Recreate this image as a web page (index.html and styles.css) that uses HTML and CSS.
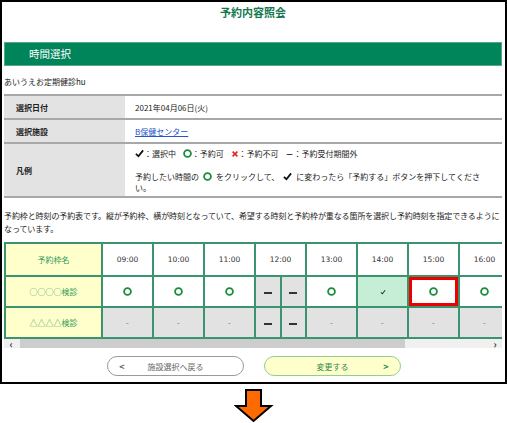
FILE: index.html
```html
<!DOCTYPE html>
<html>
<head>
    <meta charset="UTF-8">
    <title>予約内容照会</title>
    <link rel="stylesheet" href="styles.css">
</head>
<body>
    <div class="frame">
        <h1 class="page-title">予約内容照会</h1>
        <div class="section-bar">時間選択</div>
        <div class="menu-name">あいうえお定期健診hu</div>

        <table class="info-table">
            <tr>
                <th>選択日付</th>
                <td>2021年04月06日(火)</td>
            </tr>
            <tr>
                <th>選択施設</th>
                <td><a href="#">B保健センター</a></td>
            </tr>
            <tr class="legend-row">
                <th>凡例</th>
                <td>
                    <p class="legend">
                        <svg class="ic-check" viewBox="0 0 10 10"><path d="M1 5.5 L3.8 8 L9 1.5"/></svg>：選択中
                        <svg class="ic-ok" viewBox="0 0 10 10"><circle cx="5" cy="5" r="3.8"/></svg>：予約可
                        <svg class="ic-ng" viewBox="0 0 10 10"><path d="M2 2 L8 8 M8 2 L2 8"/></svg>：予約不可
                        <span class="dash">－</span>：予約受付期間外
                    </p>
                    <p class="howto">予約したい時間の<svg class="ic-ok" viewBox="0 0 10 10"><circle cx="5" cy="5" r="3.8"/></svg>をクリックして、<svg class="ic-check" viewBox="0 0 10 10"><path d="M1 5.5 L3.8 8 L9 1.5"/></svg>に変わったら「予約する」ボタンを押下してください。</p>
                </td>
            </tr>
        </table>

        <p class="desc">予約枠と時刻の予約表です。縦が予約枠、横が時刻となっていて、希望する時刻と予約枠が重なる箇所を選択し予約時刻を指定できるようになっています。</p>

        <div class="slot-scroll">
            <table class="slot-table">
                <colgroup>
                    <col class="c-name">
                    <col class="c-time"><col class="c-time"><col class="c-time">
                    <col class="c-half"><col class="c-half">
                    <col class="c-time"><col class="c-time"><col class="c-time"><col class="c-time">
                </colgroup>
                <tr class="head">
                    <th class="name">予約枠名</th>
                    <th>09:00</th>
                    <th>10:00</th>
                    <th>11:00</th>
                    <th colspan="2">12:00</th>
                    <th>13:00</th>
                    <th>14:00</th>
                    <th>15:00</th>
                    <th>16:00</th>
                </tr>
                <tr>
                    <th class="name">○○○○検診</th>
                    <td><svg class="ic-ok" viewBox="0 0 10 10"><circle cx="5" cy="5" r="3.8"/></svg></td>
                    <td><svg class="ic-ok" viewBox="0 0 10 10"><circle cx="5" cy="5" r="3.8"/></svg></td>
                    <td><svg class="ic-ok" viewBox="0 0 10 10"><circle cx="5" cy="5" r="3.8"/></svg></td>
                    <td class="off"><span class="bar"></span></td>
                    <td class="off"><span class="bar"></span></td>
                    <td><svg class="ic-ok" viewBox="0 0 10 10"><circle cx="5" cy="5" r="3.8"/></svg></td>
                    <td class="picked"><svg class="ic-small-check" viewBox="0 0 10 10"><path d="M1.5 5.5 L4 8 L8.5 2"/></svg></td>
                    <td class="focus"><svg class="ic-ok" viewBox="0 0 10 10"><circle cx="5" cy="5" r="3.8"/></svg></td>
                    <td><svg class="ic-ok" viewBox="0 0 10 10"><circle cx="5" cy="5" r="3.8"/></svg></td>
                </tr>
                <tr>
                    <th class="name">△△△△検診</th>
                    <td class="off">-</td>
                    <td class="off">-</td>
                    <td class="off">-</td>
                    <td class="off"><span class="bar"></span></td>
                    <td class="off"><span class="bar"></span></td>
                    <td class="off">-</td>
                    <td class="off">-</td>
                    <td class="off">-</td>
                    <td class="off">-</td>
                </tr>
            </table>
        </div>
        <div class="fake-scrollbar">
            <span class="arrow">&lsaquo;</span>
            <div class="track"><div class="thumb"></div></div>
            <span class="arrow">&rsaquo;</span>
        </div>

        <div class="buttons">
            <button class="btn btn-back"><span>&lt;</span>施設選択へ戻る<span></span></button>
            <button class="btn btn-next"><span></span>変更する<span>&gt;</span></button>
        </div>
    </div>

    <div class="down-arrow">
        <svg width="40" height="34" viewBox="0 0 40 34">
            <path d="M12 1 H27 V17 H37 L19.5 32 L2 17 H12 Z"/>
        </svg>
    </div>
</body>
</html>
```

FILE: styles.css
```css
body {
    margin: 0;
    font-family: "Noto Sans CJK JP", "Noto Sans", sans-serif;
    font-size: 8px;
    color: #222;
    background: white;
}

.frame {
    width: 507px;
    height: 384px;
    box-sizing: border-box;
    border: 2px solid #000;
    padding: 0 3px 0 2px;
}

.page-title {
    margin: 0;
    padding-top: 3px;
    height: 37px;
    line-height: 14px;
    font-size: 11px;
    font-weight: bold;
    text-align: center;
    color: #14774d;
}

.section-bar {
    height: 22px;
    line-height: 22px;
    background-color: #00845a;
    border: 1px solid #5aa886;
    color: white;
    font-size: 10.5px;
    padding-left: 24px;
}

.menu-name {
    margin-top: 10px;
    line-height: 12px;
    height: 18px;
}

.info-table {
    width: 100%;
    border-collapse: collapse;
    border-top: 2px solid #a8a8a8;
}

.info-table th,
.info-table td {
    border-bottom: 2px solid #a8a8a8;
    height: 22px;
    padding: 0;
    text-align: left;
    vertical-align: middle;
}

.info-table th {
    width: 109px;
    padding-left: 12px;
    background-color: #e3e3e3;
    font-weight: bold;
}

.info-table td {
    padding-left: 10px;
    padding-right: 19px;
}

.info-table a {
    color: #2456c8;
}

.legend-row td {
    padding-top: 4px;
    padding-bottom: 3px;
    height: auto;
}

.legend {
    margin: 0;
    line-height: 12px;
}

.howto {
    margin: 11px 0 0;
    line-height: 11px;
}

.howto svg {
    margin: 0 4px;
}

.ic-check {
    width: 9px;
    height: 9px;
    vertical-align: -1px;
    fill: none;
    stroke: #111;
    stroke-width: 2;
}

.ic-ok {
    width: 9px;
    height: 9px;
    vertical-align: -1px;
    fill: none;
    stroke: #1a8c3a;
    stroke-width: 2;
}

.ic-ng {
    width: 8px;
    height: 8px;
    vertical-align: -1px;
    margin-left: 5px;
    fill: none;
    stroke: #e8261c;
    stroke-width: 2;
}

.dash {
    font-weight: bold;
    margin-left: 5px;
}

.legend .ic-ok {
    margin-left: 5px;
}

.desc {
    margin: 11px 0 7px;
    line-height: 13px;
    letter-spacing: -0.1px;
}

.slot-scroll {
    overflow: hidden;
    width: 100%;
}

.slot-table {
    border-collapse: collapse;
    table-layout: fixed;
    width: 505px;
}

.c-name { width: 97px; }
.c-time { width: 51px; }
.c-half { width: 25.5px; }

.slot-table th,
.slot-table td {
    border: 2px solid #3b9470;
    text-align: center;
    vertical-align: middle;
    padding: 0;
    height: 29px;
    font-weight: normal;
}

.slot-table .head th {
    height: 31px;
    color: #333;
    font-family: "DejaVu Sans", sans-serif;
    font-size: 7.5px;
}

.slot-table th.name,
.slot-table .head th.name {
    background-color: #ffffcc;
    color: #2e9a5a;
    font-family: "Noto Sans CJK JP", sans-serif;
    font-size: 8px;
}

.slot-table td.off {
    background-color: #e2e2e2;
    color: #777;
}

.slot-table .bar {
    display: inline-block;
    width: 8px;
    height: 2px;
    background: #333;
    vertical-align: middle;
}

.slot-table td.picked {
    background-color: #c6eed6;
}

.ic-small-check {
    width: 6px;
    height: 6px;
    fill: none;
    stroke: #333;
    stroke-width: 1.8;
}

.slot-table td.focus {
    box-shadow: inset 0 0 0 3px #ee0000;
}

.fake-scrollbar {
    display: flex;
    align-items: center;
    height: 9px;
    background: #f0f0f0;
}

.fake-scrollbar .arrow {
    width: 14px;
    text-align: center;
    font-size: 10px;
    line-height: 9px;
    color: #333;
    font-weight: bold;
}

.fake-scrollbar .track {
    flex: 1;
    height: 9px;
}

.fake-scrollbar .thumb {
    width: 385px;
    height: 9px;
    margin-left: 2px;
    background: #cdcdcd;
}

.buttons {
    display: flex;
    justify-content: center;
    gap: 20px;
    margin-top: 8px;
    padding-left: 2px;
}

.btn {
    display: flex;
    align-items: center;
    justify-content: space-between;
    width: 137px;
    height: 20px;
    border-radius: 10px;
    padding: 0 10px;
    font-family: "Noto Sans CJK JP", sans-serif;
    font-size: 8px;
}

.btn span {
    width: 8px;
    font-size: 9px;
    font-weight: bold;
}

.btn-back {
    background: white;
    border: 1px solid #9a9a9a;
    color: #666;
}

.btn-next {
    background: #ffffcc;
    border: 1px solid #8fd08f;
    color: #2e8a50;
}

.down-arrow {
    width: 507px;
    display: flex;
    justify-content: center;
    padding-top: 5px;
}

.down-arrow path {
    fill: #ff6a00;
    stroke: #000;
    stroke-width: 2;
    stroke-linejoin: miter;
}
```
